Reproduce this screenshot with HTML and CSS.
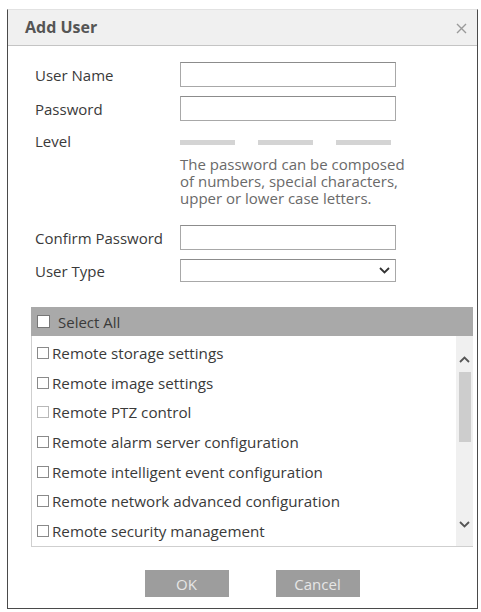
FILE: index.html
```html
<!DOCTYPE html>
<html>
<head>
<meta charset="utf-8">
<link rel="stylesheet" href="styles.css">
</head>
<body>
<div class="dialog">
  <div class="header">
    <span class="title">Add User</span>
    <svg class="close" width="11" height="11" viewBox="0 0 11 11"><path d="M1 1L10 10M10 1L1 10" stroke="#9a9a9a" stroke-width="1.4" fill="none"/></svg>
  </div>
  <div class="form">
    <div class="row r-user"><span class="label">User Name</span><div class="input"></div></div>
    <div class="row r-pass"><span class="label">Password</span><div class="input"></div></div>
    <div class="row r-level"><span class="label">Level</span>
      <div class="bars"><span class="bar"></span><span class="bar"></span><span class="bar"></span></div>
    </div>
    <div class="hint">The password can be composed<br>of numbers, special characters,<br>upper or lower case letters.</div>
    <div class="row r-confirm"><span class="label">Confirm Password</span><div class="input"></div></div>
    <div class="row r-type"><span class="label">User Type</span>
      <div class="input select"><svg width="11" height="7" viewBox="0 0 11 7"><path d="M1 1L5.5 5.5L10 1" stroke="#333" stroke-width="1.8" fill="none"/></svg></div>
    </div>
  </div>
  <div class="perms">
    <div class="perm-head"><span class="cb cb-head"></span>Select All</div>
    <div class="perm-body">
      <ul class="perm-list">
        <li><span class="cb"></span>Remote storage settings</li>
        <li><span class="cb"></span>Remote image settings</li>
        <li><span class="cb cb-light"></span>Remote PTZ control</li>
        <li><span class="cb"></span>Remote alarm server configuration</li>
        <li><span class="cb"></span>Remote intelligent event configuration</li>
        <li><span class="cb"></span>Remote network advanced configuration</li>
        <li><span class="cb"></span>Remote security management</li>
      </ul>
      <div class="scrollbar">
        <div class="sb-up"><svg width="11" height="7" viewBox="0 0 11 7"><path d="M1 6L5.5 1.5L10 6" stroke="#555" stroke-width="1.8" fill="none"/></svg></div>
        <div class="thumb"></div>
        <div class="sb-down"><svg width="11" height="7" viewBox="0 0 11 7"><path d="M1 1L5.5 5.5L10 1" stroke="#555" stroke-width="1.8" fill="none"/></svg></div>
      </div>
    </div>
  </div>
  <div class="buttons">
    <button class="btn">OK</button>
    <button class="btn">Cancel</button>
  </div>
</div>
</body>
</html>
```
FILE: styles.css
```css
html, body {
  margin: 0;
  padding: 0;
  background: #fff;
}
body {
  font-family: "Open Sans", "Noto Sans", sans-serif;
  font-size: 15px;
  color: #3a3a3a;
}
.dialog {
  box-sizing: border-box;
  width: 471px;
  margin: 9px 0 0 7px;
  border: 1px solid #4a4a4a;
  border-top: 1px solid #e2e2e2;
  padding-bottom: 11px;
  background: #fff;
}
.header {
  height: 35px;
  background: #f0f0f0;
  border-bottom: 1px solid #c4c4c4;
  display: flex;
  align-items: center;
  justify-content: space-between;
  padding: 0 10px 0 17px;
}
.title {
  font-weight: bold;
  font-size: 16px;
  color: #555;
  margin-top: -1px;
}
.close {
  margin-top: 1px;
}
.form {
  display: flex;
  flex-direction: column;
  padding: 16px 0 0 27px;
}
.row {
  display: flex;
  align-items: center;
}
.label {
  width: 145px;
  flex: none;
  line-height: 20px;
}
.input {
  box-sizing: border-box;
  width: 216px;
  height: 25px;
  border: 1px solid #a8a8a8;
  border-top-color: #8c8c8c;
  background: #fff;
}
.r-pass { margin-top: 9px; }
.r-level { margin-top: 9px; height: 22px; }
.bars {
  display: flex;
  gap: 23px;
  margin-top: 2px;
}
.bar {
  width: 55px;
  height: 5px;
  background: #d4d4d4;
}
.hint {
  margin: 4px 0 0 145px;
  font-size: 15px;
  line-height: 17px;
  color: #6a6a6a;
}
.r-confirm { margin-top: 18px; }
.r-type { margin-top: 9px; }
.select {
  height: 23px;
  display: flex;
  align-items: center;
  justify-content: flex-end;
  padding-right: 5px;
}
.perms {
  width: 442px;
  margin: 25px 0 0 23px;
}
.perm-head {
  height: 29px;
  background: #a9a9a9;
  display: flex;
  align-items: center;
  padding-left: 6px;
  color: #3a3a3a;
}
.cb {
  box-sizing: border-box;
  width: 12px;
  height: 12px;
  border: 1px solid #8a8a8a;
  background: #fff;
  flex: none;
  margin-right: 3px;
}
.cb-head {
  width: 13px;
  height: 13px;
  border-color: #777;
  margin-right: 8px;
}
.cb-light {
  border-color: #b8b8b8;
}
.perm-body {
  height: 211px;
  box-sizing: border-box;
  border-left: 1px solid #cfcfcf;
  border-bottom: 1px solid #cfcfcf;
  display: flex;
}
.perm-list {
  list-style: none;
  margin: 0;
  padding: 2px 0 0 5px;
  flex: 1;
  font-size: 15.2px;
}
.perm-list li {
  height: 29.7px;
  display: flex;
  align-items: center;
  white-space: nowrap;
}
.scrollbar {
  width: 17px;
  flex: none;
  background: #f0f0f0;
  display: flex;
  flex-direction: column;
  align-items: center;
}
.sb-up {
  height: 36px;
  display: flex;
  flex-direction: column;
  justify-content: flex-start;
  padding-top: 20px;
  box-sizing: border-box;
}
.thumb {
  width: 12px;
  height: 70px;
  background: #cdcdcd;
}
.sb-down {
  padding-top: 79px;
}
.sb-up svg, .sb-down svg {
  display: block;
}
.buttons {
  width: 442px;
  margin: 23px 0 0 23px;
  display: flex;
  justify-content: center;
  gap: 47px;
}
.btn {
  width: 84px;
  height: 27px;
  border: none;
  background: #9d9d9d;
  color: #e6e6e6;
  font-family: "Open Sans", "Noto Sans", sans-serif;
  font-size: 15px;
  padding: 0;
}
```
